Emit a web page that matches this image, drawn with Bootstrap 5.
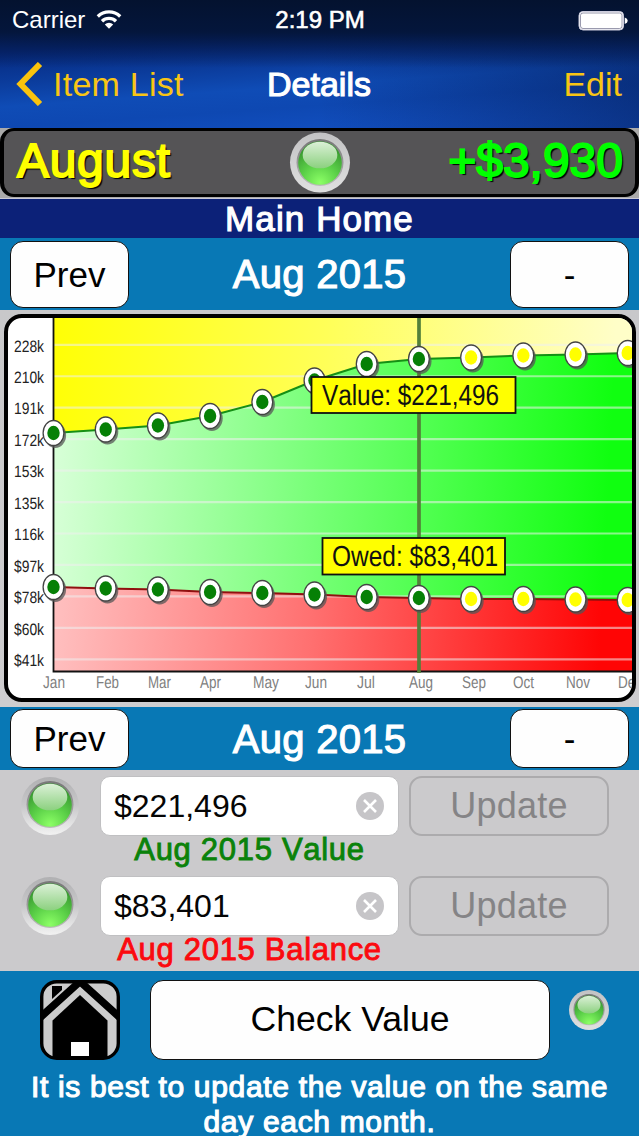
<!DOCTYPE html>
<html lang="en">
<head>
<meta charset="utf-8">
<meta name="viewport" content="width=device-width, initial-scale=1">
<title>Details</title>
<link href="https://cdn.jsdelivr.net/npm/bootstrap@5.3.0/dist/css/bootstrap.min.css" rel="stylesheet">
<style>
body{font-family:"Liberation Sans",Arial,sans-serif;background:#0878b5;line-height:1;width:639px;height:1136px;overflow:hidden;font-kerning:none}
.medium{-webkit-text-stroke:1.15px currentColor}
.top-area{height:128px;color:#fff;background:
 linear-gradient(to bottom,#04122f 0,#04163c 32px,rgba(4,24,72,.55) 50px,rgba(6,40,115,0) 68px),
 linear-gradient(to right,rgba(10,60,170,0) 50%,rgba(3,22,75,.5) 100%),
 linear-gradient(176deg,#062a80 30%,#0b3c9c 48%,#0f4cb6 62%,#0e48b2 74%,#1453c8 100%)}
.status-row{height:40px;font-size:24px;padding:0 11px 0 12px}
.status-time{-webkit-text-stroke-width:.6px}
.nav-row{height:88px;font-size:34px;padding:0 17px 0 16px}
.third{flex:1 1 0}
.wifi{margin-left:11px}
.back-label{margin-left:9px;letter-spacing:.25px}
.gold{color:#f8c515}
.total-wrap{height:71px;background:#aaa;padding-bottom:1px;border-bottom:1px solid #c9c9d6}
.total-box{height:69px;background:#555456;border:3px solid #000;border-left-width:4px;border-right-width:4px;border-radius:14px;font-size:48px;padding:0 12px}
.total-box .word{-webkit-text-stroke:1.9px currentColor;text-shadow:2px 2px 1px #000;padding-bottom:3px}
.total-month{color:#ff0;letter-spacing:.7px;padding-left:1px}
.total-gain{color:#0f0}
.home-title{height:39px;background:#0c2178;color:#fff;font-size:35px;letter-spacing:1.1px}
.month-bar{background:#0878b5;color:#fff;font-size:40px;padding:0 10px}
.month-bar .medium{letter-spacing:.3px}
.bar-tall{height:72px}.bar-short{height:63px}
.bar-tall .cell-btn{height:67px}.bar-short .cell-btn{height:59px}
.cell-btn{width:119px;border:1.5px solid #111;border-radius:13px;background:#fefefe;color:#000;font-size:35px;line-height:1;padding:0}
.chart-panel{height:397px;background:linear-gradient(#c8c8ca,#cecdcf);padding:4px 3px 0 4px}
.chart-box{width:632px;height:388px;border:4px solid #000;border-radius:18px;background:#fff;overflow:hidden}
.form-area{height:201px;background:#cbcacc;padding:6px 0 0 20px}
.form-line{height:100px}
.lamp{margin-top:-2px}
.money-field{width:299px;height:60px;background:#fff;border:1px solid #c0c0c2;border-radius:10px;font-size:32px;color:#050505;padding:0 14px 0 13px;margin-left:20px}
.caption-text{font-size:31px;width:299px;margin:-2px 0 0 80px;letter-spacing:.7px;-webkit-text-stroke-width:.9px;white-space:nowrap}
.green-text{color:#0a820a}.red-text{color:#fb0a0f}
.upd{width:200px;height:60px;border:2px solid #acabad;border-radius:13px;font-size:36px;color:#858486;letter-spacing:.2px;margin-left:10px;padding:0;line-height:1;background:none}
.foot{height:165px;color:#fff;padding-top:9px}
.house{margin-left:40px}
.check-btn{width:400px;height:80px;margin-left:29px;font-size:35.6px}
.lamp-small{margin:9px 0 0 19px}
.tip-text{font-size:30px;line-height:35px;letter-spacing:.68px;margin-top:9px}
</style>
<script src="https://cdn.jsdelivr.net/npm/bootstrap@5.3.0/dist/js/bootstrap.bundle.min.js"></script>
</head>
<body>
<svg width="0" height="0" class="position-absolute">
 <defs>
  <linearGradient id="rim" x1="0" y1="0" x2="0" y2="1"><stop offset="0" stop-color="#b0b0b2"/><stop offset=".5" stop-color="#c9c9cb"/><stop offset="1" stop-color="#f2f2f2"/></linearGradient>
  <linearGradient id="rimLight" x1="0" y1="0" x2="0" y2="1"><stop offset="0" stop-color="#c2c2c4"/><stop offset="1" stop-color="#e0e0e0"/></linearGradient>
  <linearGradient id="well" x1="0" y1="0" x2="0" y2="1"><stop offset="0" stop-color="#777"/><stop offset="1" stop-color="#bbb"/></linearGradient>
  <radialGradient id="ball" cx=".5" cy=".95" r=".95"><stop offset="0" stop-color="#8cff66"/><stop offset=".45" stop-color="#5bd048"/><stop offset="1" stop-color="#2f8a2a"/></radialGradient>
  <linearGradient id="gloss" x1="0" y1="0" x2="0" y2="1"><stop offset="0" stop-color="#e8f8e4"/><stop offset="1" stop-color="#8fd083"/></linearGradient>
  <g id="orb"><circle cx="30" cy="30.500" r="23.500" fill="url(#well)"/><circle cx="30" cy="31" r="21.800" fill="url(#ball)"/><ellipse cx="30" cy="23" rx="17.300" ry="13.300" fill="url(#gloss)" opacity=".93"/></g>
 </defs>
</svg>

<header class="top-area">
 <div class="status-row d-flex align-items-center">
  <div class="third d-flex align-items-center"><span>Carrier</span>
   <svg class="wifi" width="26" height="22" viewBox="0 0 26 22" fill="none" stroke="#fff" stroke-width="3.300"><path d="M1.800 7.500a16 16 0 0 1 22.400 0M6 12.300a10 10 0 0 1 14 0"/><path d="M13 19.800 8.800 15.500a6 6 0 0 1 8.400 0z" fill="#fff" stroke="none"/></svg>
  </div>
  <span class="medium status-time">2:19 PM</span>
  <div class="third text-end"><svg width="50" height="22" viewBox="0 0 50 22"><rect x="1" y="1.500" width="44.500" height="18.500" rx="4" fill="#fff" stroke="#ccd" stroke-width="1"/><rect x="2.500" y="3" width="41.500" height="15.500" rx="2.500" fill="none" stroke="#557" stroke-width=".6"/><path d="M46.700 7.500q3 1 3 3.300t-3 3.300z" fill="#fff"/></svg></div>
 </div>
 <nav class="nav-row d-flex align-items-center">
  <div class="third gold d-flex align-items-center"><svg width="28" height="44" viewBox="0 0 28 44" fill="none" stroke="#fac40d" stroke-width="6"><path d="M24 2 4.500 22 24 42"/></svg><span class="back-label">Item List</span></div>
  <span class="medium">Details</span>
  <div class="third gold text-end">Edit</div>
 </nav>
</header>

<section class="total-wrap">
 <div class="total-box d-flex align-items-center">
  <div class="third word total-month">August</div>
  <svg width="62" height="62" viewBox="-1 0 62 62"><circle cx="30" cy="30.500" r="30" fill="url(#rimLight)"/><use href="#orb"/></svg>
  <div class="third word total-gain text-end">+$3,930</div>
 </div>
</section>
<h1 class="home-title medium m-0 d-flex align-items-center justify-content-center fw-normal">Main Home</h1>

<div class="month-bar bar-tall d-flex align-items-center justify-content-between">
 <button class="cell-btn btn">Prev</button><span class="medium">Aug 2015</span><button class="cell-btn btn">-</button>
</div>

<section class="chart-panel"><div class="chart-box"><svg id="chart" width="624" height="380" viewBox="8 318 624 380" font-family="Liberation Sans" text-rendering="geometricPrecision"></svg></div></section>

<div class="month-bar bar-short d-flex align-items-center justify-content-between">
 <button class="cell-btn btn">Prev</button><span class="medium">Aug 2015</span><button class="cell-btn btn">-</button>
</div>

<section class="form-area">
 <div class="form-line">
  <div class="d-flex align-items-start">
   <svg class="lamp" width="60" height="62" viewBox="0 0 60 62"><circle cx="30" cy="32" r="29" fill="url(#rim)"/><use href="#orb"/></svg>
   <div class="money-field d-flex align-items-center justify-content-between"><span>$221,496</span><svg width="28" height="28" viewBox="0 0 28 28"><circle cx="14" cy="14" r="14" fill="#c6c5c8"/><path d="m8 8 12 12M20 8 8 20" stroke="#fff" stroke-width="2.600"/></svg></div>
   <button class="upd btn">Update</button>
  </div>
  <div class="caption-text medium text-center green-text">Aug 2015 Value</div>
 </div>
 <div class="form-line">
  <div class="d-flex align-items-start">
   <svg class="lamp" width="60" height="62" viewBox="0 0 60 62"><circle cx="30" cy="32" r="29" fill="url(#rim)"/><use href="#orb"/></svg>
   <div class="money-field d-flex align-items-center justify-content-between"><span>$83,401</span><svg width="28" height="28" viewBox="0 0 28 28"><circle cx="14" cy="14" r="14" fill="#c6c5c8"/><path d="m8 8 12 12M20 8 8 20" stroke="#fff" stroke-width="2.600"/></svg></div>
   <button class="upd btn">Update</button>
  </div>
  <div class="caption-text medium text-center red-text">Aug 2015 Balance</div>
 </div>
</section>

<footer class="foot">
 <div class="d-flex">
  <svg class="house" width="81" height="80" viewBox="0 0 81 80"><defs><clipPath id="tile"><rect x="2" y="2" width="76" height="76" rx="13"/></clipPath></defs>
   <rect x="1.500" y="1.500" width="77" height="77" rx="15" fill="#ccc"/>
   <g clip-path="url(#tile)"><path d="M12 6h10v4L12 19z"/><path d="M-2 39.500 40 1.500 82 39.500" fill="none" stroke="#000" stroke-width="7.500"/><path d="M12.500 40.500 40 15 67.500 40.500V80H12.500z"/><path d="M31 62h18v14H31z" fill="#fff"/></g>
   <rect x="1.700" y="1.700" width="76.600" height="76.600" rx="15" fill="none" stroke="#000" stroke-width="3.400"/></svg>
  <button class="cell-btn check-btn btn">Check Value</button>
  <svg class="lamp-small" width="40" height="42" viewBox="0 0 60 62"><circle cx="30" cy="31" r="30" fill="url(#rimLight)"/><use href="#orb"/></svg>
 </div>
 <div class="tip-text medium text-center">It is best to update the value on the same<br>day each month.</div>
</footer>

<script>
const months=['Jan','Feb','Mar','Apr','May','Jun','Jul','Aug','Sep','Oct','Nov','Dec'];
const monthX=[43,96,148,200,253,305,357,409,462,513,566,618], monthW=[22,23,23,21,26,22,18,24,24,21,24,24];
const value=[433,429.5,425.5,416,402,380.5,364,359,357.5,355.5,354.5,353];
const owed=[587,588.5,589.5,592,593,594.5,597,598,599,599,599.5,600];
const scale=['228k','210k','191k','172k','153k','135k','116k','$97k','$78k','$60k','$41k'];
const px=i=>53.5+i*52.2;
const line=a=>a.map((y,i)=>px(i)+' '+y).join(' L');
const grad=(id,a,b,c)=>`<linearGradient id="${id}" gradientUnits="userSpaceOnUse" x1="54" y1="0" x2="632" y2="30"><stop offset="0" stop-color="${a}"/><stop offset=".5" stop-color="${b}"/><stop offset="1" stop-color="${c}"/></linearGradient>`;
let s='<defs>'+grad('gy','#ffff00','#ffff58','#fffec8')+grad('gg','#e0ffe0','#76ff76','#10ff10')+grad('gr','#ffc9c9','#ff7070','#ff0505')+'</defs>';
s+='<rect x="54" y="318" width="578" height="354" fill="url(#gy)"/>';
s+=`<path d="M${line(value)} L632 353 V672 H54z" fill="url(#gg)"/><path d="M${line(owed)} L632 600 V672 H54z" fill="url(#gr)"/>`;
scale.forEach((t,i)=>{s+=`<path d="M54 ${344.8+i*31.45}H632" stroke="#eee" stroke-opacity=".55" stroke-width="2.200"/>`;});
s+=`<path d="M${line(value)}" fill="none" stroke="#159015" stroke-width="2"/><path d="M${line(owed)}" fill="none" stroke="#901010" stroke-width="2"/>`;
s+='<path d="M53.500 318V671.500H632" fill="none" stroke="#111" stroke-width="1.800"/><path d="M419 318V673" stroke="#53803a" stroke-width="3.700"/>';
scale.forEach((t,i)=>{s+=`<text x="14" y="${351.5+i*31.45}" font-size="16.500" fill="#222" textLength="30" lengthAdjust="spacingAndGlyphs">${t}</text>`;});
months.forEach((t,i)=>{s+=`<text x="${monthX[i]}" y="687.5" font-size="17" fill="#808080" textLength="${monthW[i]}" lengthAdjust="spacingAndGlyphs">${t}</text>`;});
const dot=(i,y)=>`<ellipse cx="${px(i)+1.8}" cy="${y+2.2}" rx="10.800" ry="12.800" fill="#555" opacity=".75"/><ellipse cx="${px(i)}" cy="${y}" rx="10.400" ry="12.500" fill="#fff" stroke="#444" stroke-width="1.300"/><ellipse cx="${px(i)}" cy="${y}" rx="6.200" ry="7.200" fill="${i<8?'#068006':'#ff0'}"/>`;
value.forEach((y,i)=>s+=dot(i,y)); owed.forEach((y,i)=>s+=dot(i,y));
const tip=(x,y,w,h,tx,tw,t)=>`<rect x="${x}" y="${y}" width="${w}" height="${h}" fill="#ff0" stroke="#111" stroke-width="1.800"/><text x="${tx}" y="${y+27.5}" font-size="29" fill="#111" textLength="${tw}" lengthAdjust="spacingAndGlyphs">${t}</text>`;
s+=tip(311.5,377,204,36,322,177,'Value: $221,496')+tip(322.5,538,182.5,36.500,332,166,'Owed: $83,401');
document.getElementById('chart').innerHTML=s;
</script>
</body>
</html>
